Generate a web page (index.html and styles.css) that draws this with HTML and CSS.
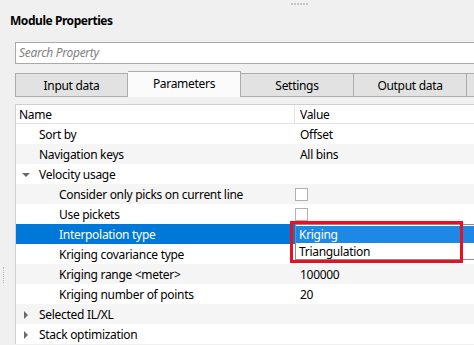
FILE: index.html
```html
<!DOCTYPE html>
<html lang="en">

<head>
  <meta charset="UTF-8">
  <meta name="viewport" content="width=device-width, initial-scale=1.0">
  <title>Module Properties</title>
  <link rel="stylesheet" href="styles.css">
</head>

<body>

  <div class="panel">
    <!-- splitter grips -->
    <div class="top-grip"><span></span><span></span><span></span><span></span><span></span><span></span></div>
    <div class="side-grip"></div>

    <h1 class="title">Module Properties</h1>

    <div class="search">Search Property</div>

    <div class="tabs">
      <div class="tab">Input data</div>
      <div class="tab selected">Parameters</div>
      <div class="tab">Settings</div>
      <div class="tab">Output data</div>
      <div class="tab"></div>
    </div>

    <div class="tree">
      <div class="row header">
        <div class="name">Name</div>
        <div class="value">Value</div>
      </div>
      <div class="row">
        <div class="name lvl1">Sort by</div>
        <div class="value">Offset</div>
      </div>
      <div class="row alt">
        <div class="name lvl1">Navigation keys</div>
        <div class="value">All bins</div>
      </div>
      <div class="row">
        <div class="name lvl1"><span class="arrow down"></span>Velocity usage</div>
        <div class="value"></div>
      </div>
      <div class="row alt">
        <div class="name lvl2">Consider only picks on current line</div>
        <div class="value"><span class="check"></span></div>
      </div>
      <div class="row">
        <div class="name lvl2">Use pickets</div>
        <div class="value"><span class="check"></span></div>
      </div>
      <div class="row active">
        <div class="name lvl2">Interpolation type</div>
        <div class="value"></div>
      </div>
      <div class="row">
        <div class="name lvl2">Kriging covariance type</div>
        <div class="value"></div>
      </div>
      <div class="row alt">
        <div class="name lvl2">Kriging range &lt;meter&gt;</div>
        <div class="value">100000</div>
      </div>
      <div class="row">
        <div class="name lvl2">Kriging number of points</div>
        <div class="value">20</div>
      </div>
      <div class="row alt">
        <div class="name lvl1"><span class="arrow right"></span>Selected IL/XL</div>
        <div class="value"></div>
      </div>
      <div class="row">
        <div class="name lvl1"><span class="arrow right"></span>Stack optimization</div>
        <div class="value"></div>
      </div>

      <!-- combobox popup -->
      <div class="popup">
        <div class="item hover">Kriging</div>
        <div class="item">Triangulation</div>
      </div>
      <div class="mark"></div>
    </div>
  </div>

</body>

</html>
```

FILE: styles.css
```css
* {
  margin: 0;
  padding: 0;
  box-sizing: border-box;
}

body {
  font-family: "Noto Sans", "Open Sans", sans-serif;
  font-size: 12px;
  letter-spacing: -0.3px;
  color: #000;
  background-color: #f0f0f0;
  width: 474px;
  height: 345px;
  overflow: hidden;
}

.panel {
  position: relative;
  height: 345px;
}

.top-grip {
  height: 12px;
  display: flex;
  justify-content: center;
  gap: 1px;
  padding: 3px 0 0 124px;
}

.top-grip span {
  width: 2px;
  height: 2px;
  background-color: #c6c6c6;
}

.side-grip {
  position: absolute;
  left: 3px;
  top: 267px;
  width: 2px;
  height: 16px;
  border-left: 1px dotted #b8b8b8;
}

.title {
  font-size: 12px;
  font-weight: bold;
  letter-spacing: -0.45px;
  line-height: 16px;
  padding: 1px 0 0 10px;
}

.search {
  margin: 13px 0 0 15px;
  width: 459px;
  height: 22px;
  line-height: 20px;
  padding-left: 3px;
  background-color: #fff;
  border: 1px solid #a9a9a9;
  border-right: none;
  color: #808080;
  font-style: italic;
}

.tabs {
  display: flex;
  margin: 7px 0 0 15px;
  width: 459px;
  height: 26px;
  overflow: hidden;
}

.tab {
  width: 113px;
  flex-shrink: 0;
  height: 24px;
  margin-top: 2px;
  line-height: 23px;
  text-align: center;
  background-color: #e2e2e2;
  border: 1px solid #acacac;
  border-left: none;
}

.tab:first-child {
  border-left: 1px solid #acacac;
}

.tab.selected {
  height: 26px;
  margin-top: 0;
  line-height: 23px;
  background-color: #fbfbfb;
  border-bottom: none;
}

.tree {
  position: relative;
  margin: 7px 0 0 15px;
  width: 459px;
  background-color: #fff;
  border-top: 1px solid #cfcfcf;
  border-left: 1px solid #cfcfcf;
}

.row {
  display: flex;
  height: 20px;
  line-height: 20px;
  background-color: #fff;
}

.row.alt {
  background-color: #f5f5f5;
}

.row.active {
  background-color: #0078d7;
  color: #fff;
}

.row.header {
  height: 19px;
  line-height: 18px;
  border-bottom: 1px solid #e3e3e3;
}

.name {
  width: 278px;
  flex-shrink: 0;
  padding: 1px 0 0 3px;
  display: flex;
  align-items: center;
  white-space: nowrap;
}

.name.lvl1 {
  padding-left: 23px;
}

.name.lvl2 {
  padding-left: 43px;
}

.header .value {
  border-left: 1px solid #e3e3e3;
  padding-left: 5px;
}

.value {
  flex: 1;
  padding: 1px 0 0 6px;
  display: flex;
  align-items: center;
}

.arrow {
  width: 8px;
  height: 19px;
  margin: 0 9px 0 -17px;
  display: inline-flex;
  align-items: center;
  justify-content: center;
}

.arrow.down::before {
  content: "";
  border-left: 4px solid transparent;
  border-right: 4px solid transparent;
  border-top: 4px solid #6a6a6a;
}

.arrow.right::before {
  content: "";
  border-top: 4px solid transparent;
  border-bottom: 4px solid transparent;
  border-left: 4px solid #6a6a6a;
}

.check {
  width: 13px;
  height: 13px;
  margin: -1px 0 0 -5px;
  background-color: #fff;
  border: 1px solid #b1b1b1;
}

.popup {
  position: absolute;
  left: 279px;
  top: 119px;
  width: 179px;
  height: 36px;
  background-color: #fff;
  border: 1px solid #8c8c8c;
  border-right: none;
  padding: 1px 0;
}

.item {
  height: 17px;
  line-height: 17px;
  padding-left: 3px;
}

.item.hover {
  background-color: #1e88e5;
  color: #fff;
}

.mark {
  position: absolute;
  left: 274px;
  top: 116px;
  width: 173px;
  height: 42px;
  border: 3px solid #e81123;
}
```
